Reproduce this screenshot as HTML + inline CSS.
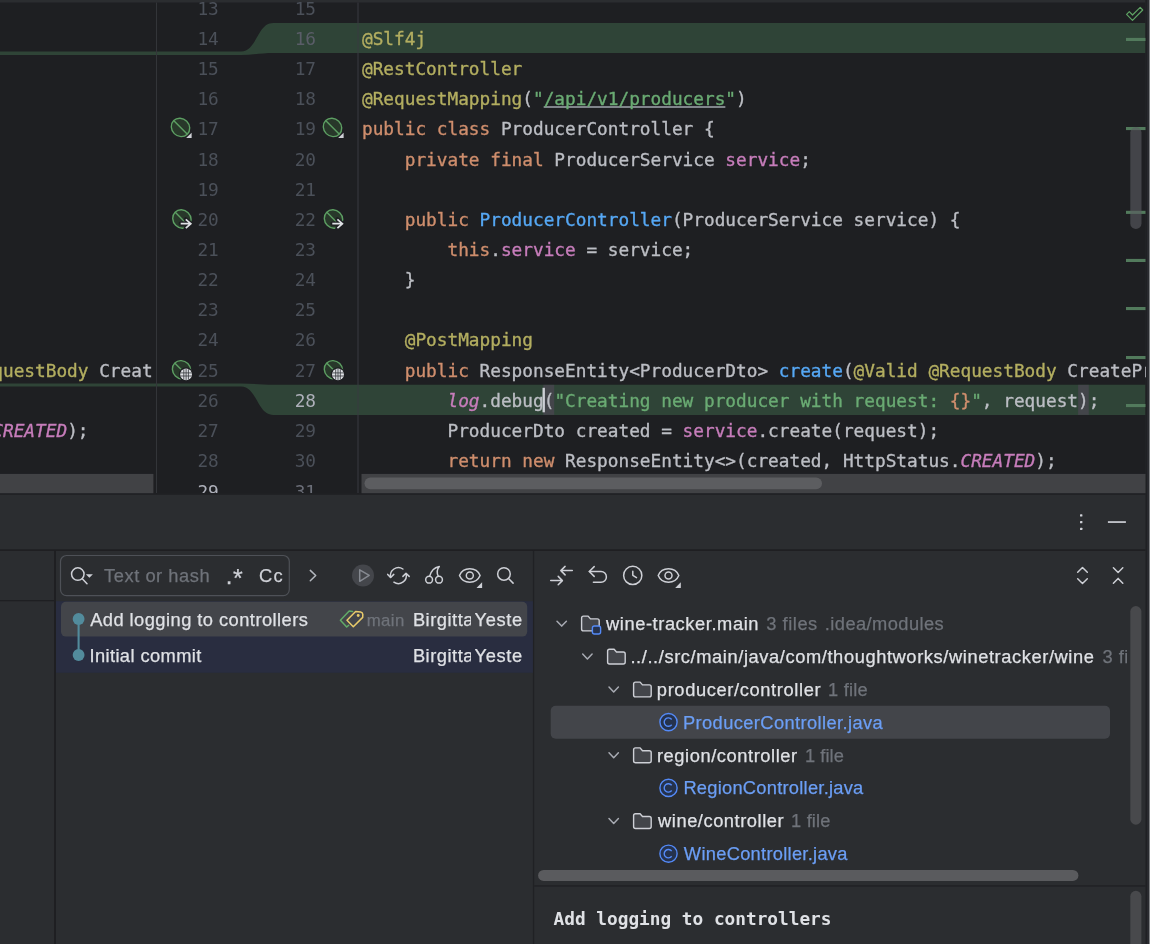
<!DOCTYPE html>
<html lang="en"><head><meta charset="utf-8"><title>IDE</title><style>
html,body{margin:0;padding:0;background:#2b2d30;}
body{width:1150px;height:944px;position:relative;overflow:hidden;font-family:'Liberation Sans',sans-serif;}
#root{position:absolute;left:0;top:0;width:1150px;height:944px;overflow:hidden;will-change:transform;}
.abs{position:absolute;}
svg{position:absolute;left:0;top:0;overflow:visible}
.code{position:absolute;font-family:'DejaVu Sans Mono','Liberation Mono',monospace;font-size:17.76px;line-height:20px;white-space:pre;color:#bcbec4;-webkit-text-stroke:0.35px;}
.ln{text-align:right;color:#4b5059;-webkit-text-stroke:0;}
.k{color:#cf8e6d} .a{color:#b3ae60} .s{color:#6aab73} .f{color:#c77dbb} .m{color:#56a8f5}
.i{font-style:italic}
.u{text-decoration:underline;text-decoration-thickness:1.5px;text-underline-offset:0.6px;text-decoration-color:#80848b;text-decoration-skip-ink:none}
.ui{position:absolute;font-family:'Liberation Sans',sans-serif;font-size:18.3px;color:#dfe1e5;white-space:pre;-webkit-text-stroke:0.25px;}
.g{color:#6f737a} .ic{color:#ced0d6} .b{color:#6b9ef5}
</style></head><body>
<div id="root">
<svg width="1150" height="944" viewBox="0 0 1150 944">
<rect x="0.00" y="0.00" width="1145.50" height="493.20" fill="#1e1f22"/>
<rect x="0.00" y="0.00" width="1145.50" height="2.50" fill="#2b2d30"/>
<path d="M0 51.6 H241 C257 51.6 257 23.0 273.2 23.0 H1145.5 V53.0 H273.2 C262 53.0 252 55 241 55 H0 Z" fill="#2f4437"/>
<path d="M0 383.4 H241 C252 383.4 262 384.85 273.2 384.85 H1145.5 V414.9 H273.2 C257 414.9 257 386.5 241 386.5 H0 Z" fill="#2f4437"/>
<rect x="543.30" y="384.85" width="10.90" height="30.05" fill="#43454a"/>
<rect x="1078.10" y="384.85" width="10.70" height="30.05" fill="#43454a"/>
<rect x="156.00" y="2.50" width="1.00" height="490.70" fill="#333539"/>
<rect x="357.50" y="2.50" width="1.00" height="490.70" fill="#393b40"/>
<rect x="542.50" y="387.80" width="2.40" height="24.50" fill="#ced0d6"/>
<rect x="1145.50" y="0.00" width="1.65" height="944.00" fill="#1f2023"/>
<rect x="1147.15" y="0.00" width="1.85" height="944.00" fill="#292b2f"/>
<rect x="1149.00" y="0.00" width="1.00" height="944.00" fill="#808285"/>
<rect x="0.00" y="493.20" width="1145.50" height="1.50" fill="#1e1f22"/>
<rect x="0.00" y="549.30" width="1145.50" height="1.60" fill="#1e1f22"/>
<rect x="54.10" y="550.80" width="1.90" height="393.20" fill="#1e1f22"/>
<rect x="0.00" y="600.00" width="54.10" height="1.30" fill="#1e1f22"/>
<rect x="532.90" y="550.80" width="1.30" height="393.20" fill="#202124"/>
<rect x="534.20" y="885.20" width="611.30" height="1.50" fill="#212225"/>
<rect x="1080.00" y="514.20" width="2.40" height="2.40" rx="0.6" fill="#ced0d6"/>
<rect x="1080.00" y="520.90" width="2.40" height="2.40" rx="0.6" fill="#ced0d6"/>
<rect x="1080.00" y="527.70" width="2.40" height="2.40" rx="0.6" fill="#ced0d6"/>
<rect x="1107.90" y="521.20" width="18.00" height="1.70" fill="#ced0d6"/>
<rect x="60.5" y="555.5" width="228.8" height="40.1" rx="6" fill="none" stroke="#4e5157" stroke-width="1.2"/>
<rect x="56.00" y="601.20" width="476.90" height="71.50" fill="#292d40"/>
<rect x="61.00" y="601.70" width="466.20" height="34.90" rx="5" fill="#43454a"/>
<rect x="550.70" y="705.80" width="559.30" height="32.90" rx="5" fill="#43454a"/>
<rect x="1130.30" y="606.00" width="11.10" height="218.70" rx="5.55" fill="#48494c"/>
<rect x="538.10" y="869.90" width="540.30" height="11.00" rx="5.5" fill="#5a5b5e"/>
<rect x="1130.30" y="890.80" width="11.10" height="79.20" rx="5.55" fill="#48494c"/>
</svg>
<div class="abs" style="left:0;top:0;width:1145.5px;height:493.2px;overflow:hidden">
<div class="code ln" style="left:160px;top:-1px;width:58.8px;">13</div>
<div class="code ln" style="left:258px;top:-1px;width:58.0px;">15</div>
<div class="code ln" style="left:160px;top:29px;width:58.8px;">14</div>
<div class="code ln" style="left:258px;top:29px;width:58.0px;color:#5a5d68;">16</div>
<div class="code" style="left:362px;top:29px;"><span class="a">@Slf4j</span></div>
<div class="code ln" style="left:160px;top:59px;width:58.8px;">15</div>
<div class="code ln" style="left:258px;top:59px;width:58.0px;">17</div>
<div class="code" style="left:362px;top:59px;"><span class="a">@RestController</span></div>
<div class="code ln" style="left:160px;top:89px;width:58.8px;">16</div>
<div class="code ln" style="left:258px;top:89px;width:58.0px;">18</div>
<div class="code" style="left:362px;top:89px;"><span class="a">@RequestMapping</span>(<span class="s">"<span class="u">/api/v1/producers</span>"</span>)</div>
<div class="code ln" style="left:160px;top:119px;width:58.8px;">17</div>
<div class="code ln" style="left:258px;top:119px;width:58.0px;">19</div>
<div class="code" style="left:362px;top:119px;"><span class="k">public class</span> ProducerController {</div>
<div class="code ln" style="left:160px;top:150px;width:58.8px;">18</div>
<div class="code ln" style="left:258px;top:150px;width:58.0px;">20</div>
<div class="code" style="left:362px;top:150px;">    <span class="k">private final</span> ProducerService <span class="f">service</span>;</div>
<div class="code ln" style="left:160px;top:180px;width:58.8px;">19</div>
<div class="code ln" style="left:258px;top:180px;width:58.0px;">21</div>
<div class="code ln" style="left:160px;top:210px;width:58.8px;">20</div>
<div class="code ln" style="left:258px;top:210px;width:58.0px;">22</div>
<div class="code" style="left:362px;top:210px;">    <span class="k">public</span> <span class="m">ProducerController</span>(ProducerService service) {</div>
<div class="code ln" style="left:160px;top:240px;width:58.8px;">21</div>
<div class="code ln" style="left:258px;top:240px;width:58.0px;">23</div>
<div class="code" style="left:362px;top:240px;">        <span class="k">this</span>.<span class="f">service</span> = service;</div>
<div class="code ln" style="left:160px;top:270px;width:58.8px;">22</div>
<div class="code ln" style="left:258px;top:270px;width:58.0px;">24</div>
<div class="code" style="left:362px;top:270px;">    }</div>
<div class="code ln" style="left:160px;top:300px;width:58.8px;">23</div>
<div class="code ln" style="left:258px;top:300px;width:58.0px;">25</div>
<div class="code ln" style="left:160px;top:330px;width:58.8px;">24</div>
<div class="code ln" style="left:258px;top:330px;width:58.0px;">26</div>
<div class="code" style="left:362px;top:330px;">    <span class="a">@PostMapping</span></div>
<div class="code ln" style="left:160px;top:361px;width:58.8px;">25</div>
<div class="code ln" style="left:258px;top:361px;width:58.0px;">27</div>
<div class="code" style="left:362px;top:361px;">    <span class="k">public</span> ResponseEntity&lt;ProducerDto&gt; <span class="m">create</span>(<span class="a">@Valid @RequestBody</span> CreateProducerRequest request) {</div>
<div class="code ln" style="left:160px;top:391px;width:58.8px;">26</div>
<div class="code ln" style="left:258px;top:391px;width:58.0px;color:#aeb0ba;">28</div>
<div class="code" style="left:362px;top:391px;">        <span class="f i">log</span>.debug(<span class="s">"Creating new producer with request: <span class="k">{}</span>"</span>, request);</div>
<div class="code ln" style="left:160px;top:421px;width:58.8px;">27</div>
<div class="code ln" style="left:258px;top:421px;width:58.0px;">29</div>
<div class="code" style="left:362px;top:421px;">        ProducerDto created = <span class="f">service</span>.create(request);</div>
<div class="code ln" style="left:160px;top:451px;width:58.8px;">28</div>
<div class="code ln" style="left:258px;top:451px;width:58.0px;">30</div>
<div class="code" style="left:362px;top:451px;">        <span class="k">return new</span> ResponseEntity&lt;&gt;(created, HttpStatus.<span class="f i">CREATED</span>);</div>
<div class="code ln" style="left:160px;top:482px;width:58.8px;color:#aeb0ba;">29</div>
<div class="code ln" style="left:258px;top:482px;width:58.0px;color:#6b6e78;">31</div>
</div>
<div class="abs" style="left:0;top:0;width:153.5px;height:493px;overflow:hidden">
<div class="code" style="left:-7.7px;top:361px;"><span class="a">questBody</span> Creat</div>
<div class="code" style="left:-7.7px;top:421px;"><span class="f i">CREATED</span>);</div>
</div>
<div class="ui g" style="left:104.08px;top:565px;letter-spacing:0.540px;line-height:21px;">Text or hash</div>
<div class="ui ic" style="left:225.69px;top:562px;letter-spacing:0.400px;line-height:27px;font-size:24px;">.</div>
<div class="ui ic" style="left:232.95px;top:564px;letter-spacing:0.400px;line-height:28px;font-size:25px;">*</div>
<div class="ui ic" style="left:258.95px;top:565px;letter-spacing:1.316px;line-height:21px;">Cc</div>
<div class="ui" style="left:90.15px;top:609px;letter-spacing:0.460px;line-height:21px;">Add logging to controllers</div>
<div class="ui" style="left:89.41px;top:645px;letter-spacing:0.403px;line-height:21px;">Initial commit</div>
<div class="ui g" style="left:366.64px;top:611px;letter-spacing:0.435px;line-height:19px;font-size:16.8px;">main</div>
<div class="ui" style="left:412.89px;top:609px;letter-spacing:0.527px;line-height:21px;width:58.2px;overflow:hidden;">Birgitta</div>
<div class="ui" style="left:474.57px;top:609px;letter-spacing:0.627px;line-height:21px;width:47.2px;overflow:hidden;">Yesterday</div>
<div class="ui" style="left:412.89px;top:645px;letter-spacing:0.527px;line-height:21px;width:58.2px;overflow:hidden;">Birgitta</div>
<div class="ui" style="left:474.57px;top:645px;letter-spacing:0.627px;line-height:21px;width:47.2px;overflow:hidden;">Yesterday</div>
<div class="abs" style="left:534px;top:600px;width:592.5999999999999px;height:268px;overflow:hidden">
<div class="ui" style="left:71.99px;top:13px;letter-spacing:0.577px;line-height:21px;">wine-tracker.main</div>
<div class="ui g" style="left:232.28px;top:13px;letter-spacing:0.537px;line-height:21px;">3 files</div>
<div class="ui g" style="left:290.82px;top:13px;letter-spacing:0.426px;line-height:21px;">.idea/modules</div>
<div class="ui" style="left:96.42px;top:46px;letter-spacing:0.591px;line-height:21px;">../../src/main/java/com/thoughtworks/winetracker/wine</div>
<div class="ui g" style="left:568.38px;top:46px;letter-spacing:0.537px;line-height:21px;">3 files</div>
<div class="ui" style="left:122.87px;top:79px;letter-spacing:0.628px;line-height:21px;">producer/controller</div>
<div class="ui g" style="left:294.10px;top:79px;letter-spacing:0.186px;line-height:21px;">1 file</div>
<div class="ui b" style="left:148.99px;top:112px;letter-spacing:0.395px;line-height:21px;">ProducerController.java</div>
<div class="ui" style="left:122.95px;top:145px;letter-spacing:0.568px;line-height:21px;">region/controller</div>
<div class="ui g" style="left:271.00px;top:145px;letter-spacing:0.046px;line-height:21px;">1 file</div>
<div class="ui b" style="left:149.39px;top:177px;letter-spacing:0.256px;line-height:21px;">RegionController.java</div>
<div class="ui" style="left:124.09px;top:210px;letter-spacing:0.542px;line-height:21px;">wine/controller</div>
<div class="ui g" style="left:257.10px;top:210px;letter-spacing:0.146px;line-height:21px;">1 file</div>
<div class="ui b" style="left:149.86px;top:243px;letter-spacing:0.283px;line-height:21px;">WineController.java</div>
</div>
<div class="code" style="left:553.6px;top:909px;font-weight:bold;color:#dfe1e5;font-size:17.75px;-webkit-text-stroke:0;">Add logging to controllers</div>
<svg width="1150" height="944" viewBox="0 0 1150 944">
<g transform="translate(180.5 127.4)"><g transform="rotate(45)"><ellipse cx="0" cy="0" rx="9.6" ry="8.8" fill="#28382a" stroke="#5d9f63" stroke-width="1.4"/><path d="M-9.4 0 H9.4" stroke="#5d9f63" stroke-width="1.4"/></g><path d="M11.1 5.4 V10.7 H5.6 Z" fill="#ced0d6"/></g>
<g transform="translate(332.5 127.4)"><g transform="rotate(45)"><ellipse cx="0" cy="0" rx="9.6" ry="8.8" fill="#28382a" stroke="#5d9f63" stroke-width="1.4"/><path d="M-9.4 0 H9.4" stroke="#5d9f63" stroke-width="1.4"/></g><path d="M11.1 5.4 V10.7 H5.6 Z" fill="#ced0d6"/></g>
<g transform="translate(181.9 219.0)"><g transform="rotate(45)"><ellipse cx="0" cy="0" rx="9.6" ry="8.8" fill="#28382a" stroke="#5d9f63" stroke-width="1.4"/><path d="M-9.4 0 H9.4" stroke="#5d9f63" stroke-width="1.4"/></g><path d="M-1.2 4.7 H8.9 M3.9 0.4 L8.9 4.7 L3.9 9.2" stroke="#1e1f22" stroke-width="4.3" fill="none" stroke-linecap="round" stroke-linejoin="round"/><path d="M-1.2 4.7 H8.9 M3.9 0.4 L8.9 4.7 L3.9 9.2" stroke="#dfe1e5" stroke-width="1.7" fill="none"/></g>
<g transform="translate(333.5 219.0)"><g transform="rotate(45)"><ellipse cx="0" cy="0" rx="9.6" ry="8.8" fill="#28382a" stroke="#5d9f63" stroke-width="1.4"/><path d="M-9.4 0 H9.4" stroke="#5d9f63" stroke-width="1.4"/></g><path d="M-1.2 4.7 H8.9 M3.9 0.4 L8.9 4.7 L3.9 9.2" stroke="#1e1f22" stroke-width="4.3" fill="none" stroke-linecap="round" stroke-linejoin="round"/><path d="M-1.2 4.7 H8.9 M3.9 0.4 L8.9 4.7 L3.9 9.2" stroke="#dfe1e5" stroke-width="1.7" fill="none"/></g>
<g transform="translate(181.6 369.8)"><g transform="rotate(45)"><ellipse cx="0" cy="0" rx="9.6" ry="8.8" fill="#28382a" stroke="#5d9f63" stroke-width="1.4"/><path d="M-9.4 0 H9.4" stroke="#5d9f63" stroke-width="1.4"/></g><circle cx="4.5" cy="4.6" r="7.2" fill="#1e1f22"/><circle cx="4.5" cy="4.6" r="5.9" fill="#dfe1e5"/><path d="M4.5 -1.3 V10.5 M2.2 -0.6 V9.8 M6.8 -0.6 V9.8 M-1 3.1 H10 M-1 6.2 H10" stroke="#3a3c41" stroke-width="0.85" fill="none"/></g>
<g transform="translate(333.5 369.8)"><g transform="rotate(45)"><ellipse cx="0" cy="0" rx="9.6" ry="8.8" fill="#28382a" stroke="#5d9f63" stroke-width="1.4"/><path d="M-9.4 0 H9.4" stroke="#5d9f63" stroke-width="1.4"/></g><circle cx="4.5" cy="4.6" r="7.2" fill="#1e1f22"/><circle cx="4.5" cy="4.6" r="5.9" fill="#dfe1e5"/><path d="M4.5 -1.3 V10.5 M2.2 -0.6 V9.8 M6.8 -0.6 V9.8 M-1 3.1 H10 M-1 6.2 H10" stroke="#3a3c41" stroke-width="0.85" fill="none"/></g>
<rect x="0" y="473.9" width="153.4" height="19.3" fill="#414245"/>
<rect x="361.5" y="473.9" width="784.0" height="19.3" fill="#414245"/>
<rect x="364.5" y="477.4" width="457.5" height="11.8" rx="5.9" fill="#5c5d60"/>
<rect x="1126" y="37.9" width="19.5" height="3.1" fill="#527a5c"/>
<rect x="1126" y="127.0" width="19.5" height="3.1" fill="#527a5c"/>
<rect x="1126" y="210.8" width="19.5" height="3.1" fill="#527a5c"/>
<rect x="1126" y="258.9" width="19.5" height="3.1" fill="#527a5c"/>
<rect x="1126" y="307.0" width="19.5" height="3.1" fill="#527a5c"/>
<rect x="1126" y="356.0" width="19.5" height="3.1" fill="#527a5c"/>
<rect x="1126" y="404.0" width="19.5" height="3.1" fill="#527a5c"/>
<rect x="1130.3" y="127" width="11.2" height="102" rx="5.6" fill="#5a5c61" fill-opacity="0.62"/>
<path d="M1126.6 14.4 L1129.3 11.7 L1132.5 15 L1140.2 7.4 L1142.7 10 L1132.5 20.3 Z" fill="none" stroke="#5fa364" stroke-width="1.2" stroke-linejoin="round"/>
<g fill="none" stroke-linecap="round" stroke-linejoin="round">
<path d="M78.6 619 V655" stroke="#528b9c" stroke-width="2.1"/>
<circle cx="78.6" cy="619" r="5.9" fill="#528b9c"/><circle cx="78.6" cy="655" r="5.9" fill="#528b9c"/>
<circle cx="77.8" cy="574.1" r="6.25" stroke="#ced0d6" stroke-width="1.5"/><path d="M82.3 578.8 L87 583.7" stroke="#ced0d6" stroke-width="1.5"/><path d="M85.9 574.2 H92.9 L89.4 577.8 Z" fill="#ced0d6"/>
<path d="M310.3 570.4 L315.7 575.5 L310.3 580.7" stroke="#b4b8bf" stroke-width="1.5"/>
<circle cx="363" cy="575.45" r="11" fill="#44464b"/>
<path d="M359.7 569.9 V581.3 L369.2 575.45 Z" stroke="#868a91" stroke-width="1.5"/>
<g stroke="#ced0d6" stroke-width="1.5"><path d="M390.6 577.3 A8 8 0 0 1 402.9 569"/><path d="M406.2 573.9 A8 8 0 0 1 393.9 582.2"/><path d="M387.7 574.4 L390.6 577.5 L393.8 574.4"/><path d="M402.9 576.4 L406 573.3 L409.2 576.4"/></g>
<g stroke="#ced0d6" stroke-width="1.5"><circle cx="429.1" cy="579.7" r="3.4"/><circle cx="439" cy="579.7" r="3.4"/><path d="M429.6 576.3 C430.8 571.2 434.6 567.4 439.3 566.4 C436.5 569.6 436.6 572.6 438.3 576.3"/></g>
<g stroke="#ced0d6" stroke-width="1.5"><path d="M459.50 575.45 C463.20 566.55 476.40 566.55 480.10 575.45 C476.40 584.35 463.20 584.35 459.50 575.45 Z"/><circle cx="469.8" cy="575.45" r="3.5"/></g><path d="M482.10 582.35 V588.10 H476.50 Z" fill="#ced0d6"/>
<circle cx="503.95" cy="573.95" r="6.3" stroke="#ced0d6" stroke-width="1.5"/><path d="M508.5 578.5 L513.1 583.1" stroke="#ced0d6" stroke-width="1.5"/>
<g stroke="#ced0d6" stroke-width="1.5"><path d="M572.3 570.6 H560.8 M565.1 566.4 L560.8 570.6 L565.1 574.9"/><path d="M550.7 580.6 H562.4 M558.2 576.4 L562.4 580.6 L558.2 584.8"/></g>
<g stroke="#ced0d6" stroke-width="1.5"><path d="M594.2 566.6 L589.3 571.5 L594.2 576.4"/><path d="M589.3 571.5 H601 A5.4 5.4 0 0 1 601 582.3 H593.4"/></g>
<g stroke="#ced0d6" stroke-width="1.5"><circle cx="632.75" cy="575.45" r="9.1"/><path d="M632.8 571.2 V575.3 L636.5 577.6"/></g>
<g stroke="#ced0d6" stroke-width="1.5"><path d="M658.20 575.45 C661.90 566.55 675.10 566.55 678.80 575.45 C675.10 584.35 661.90 584.35 658.20 575.45 Z"/><circle cx="668.5" cy="575.45" r="3.5"/></g><path d="M680.80 582.35 V588.10 H675.20 Z" fill="#ced0d6"/>
<g stroke="#ced0d6" stroke-width="1.5"><path d="M1077.7 572.2 L1082.5 567.5 L1087.3 572.2"/><path d="M1077.7 578.8 L1082.5 583.5 L1087.3 578.8"/></g>
<g stroke="#ced0d6" stroke-width="1.5"><path d="M1113.4 567.8 L1118.1 572.5 L1122.8 567.8"/><path d="M1113.4 583.2 L1118.1 578.4 L1122.8 583.2"/></g>
<g stroke-width="1.5"><path d="M352.6 611.5 L349.2 611.1 L340.4 620.2 L346.7 627 L348.7 625.3" stroke="#62ab68"/><path d="M347 620.3 L355.6 611.5 L360.6 612 Q362.6 612.3 362.8 614.4 L362.7 617.4 L353.3 626.8 Z" stroke="#e9cb6b"/><circle cx="358.2" cy="615.5" r="1.4" fill="#e9cb6b"/></g>
<path d="M557.0 621.2 L561.7 626.1 L566.4 621.2" stroke="#a8abb3" stroke-width="1.5"/>
<path transform="translate(580.9 615.4)" d="M0.7 2.6 A1.9 1.9 0 0 1 2.6 0.7 H7.2 L9.6 3.5 H16.4 A1.9 1.9 0 0 1 18.3 5.4 V13.6 A1.9 1.9 0 0 1 16.4 15.5 H2.6 A1.9 1.9 0 0 1 0.7 13.6 Z" fill="#43454a" stroke="#ced0d6" stroke-width="1.4"/>
<rect x="592.4" y="626" width="8.2" height="8" rx="2" fill="#25324d" stroke="#548af7" stroke-width="1.4"/>
<path d="M582.7 654.1 L587.4 659.0 L592.1 654.1" stroke="#a8abb3" stroke-width="1.5"/>
<path transform="translate(606.9 648.5)" d="M0.7 2.6 A1.9 1.9 0 0 1 2.6 0.7 H7.2 L9.6 3.5 H16.4 A1.9 1.9 0 0 1 18.3 5.4 V13.6 A1.9 1.9 0 0 1 16.4 15.5 H2.6 A1.9 1.9 0 0 1 0.7 13.6 Z" fill="#43454a" stroke="#ced0d6" stroke-width="1.4"/>
<path d="M609.0 687.0 L613.7 691.9 L618.4 687.0" stroke="#a8abb3" stroke-width="1.5"/>
<path transform="translate(632.9 681.4)" d="M0.7 2.6 A1.9 1.9 0 0 1 2.6 0.7 H7.2 L9.6 3.5 H16.4 A1.9 1.9 0 0 1 18.3 5.4 V13.6 A1.9 1.9 0 0 1 16.4 15.5 H2.6 A1.9 1.9 0 0 1 0.7 13.6 Z" fill="#43454a" stroke="#ced0d6" stroke-width="1.4"/>
<path d="M609.0 752.8 L613.7 757.7 L618.4 752.8" stroke="#a8abb3" stroke-width="1.5"/>
<path transform="translate(632.9 747.2)" d="M0.7 2.6 A1.9 1.9 0 0 1 2.6 0.7 H7.2 L9.6 3.5 H16.4 A1.9 1.9 0 0 1 18.3 5.4 V13.6 A1.9 1.9 0 0 1 16.4 15.5 H2.6 A1.9 1.9 0 0 1 0.7 13.6 Z" fill="#43454a" stroke="#ced0d6" stroke-width="1.4"/>
<path d="M609.0 818.6 L613.7 823.5 L618.4 818.6" stroke="#a8abb3" stroke-width="1.5"/>
<path transform="translate(632.9 813.0)" d="M0.7 2.6 A1.9 1.9 0 0 1 2.6 0.7 H7.2 L9.6 3.5 H16.4 A1.9 1.9 0 0 1 18.3 5.4 V13.6 A1.9 1.9 0 0 1 16.4 15.5 H2.6 A1.9 1.9 0 0 1 0.7 13.6 Z" fill="#43454a" stroke="#ced0d6" stroke-width="1.4"/>
<circle cx="668.5" cy="722.1" r="8.6" fill="#25324d" stroke="#548af7" stroke-width="1.4"/><path d="M671.7 719.5 A4.2 4.2 0 1 0 671.7 724.7" stroke="#548af7" stroke-width="1.4" stroke-linecap="butt"/>
<circle cx="668.5" cy="787.9" r="8.6" fill="#25324d" stroke="#548af7" stroke-width="1.4"/><path d="M671.7 785.3 A4.2 4.2 0 1 0 671.7 790.5" stroke="#548af7" stroke-width="1.4" stroke-linecap="butt"/>
<circle cx="668.5" cy="853.7" r="8.6" fill="#25324d" stroke="#548af7" stroke-width="1.4"/><path d="M671.7 851.1 A4.2 4.2 0 1 0 671.7 856.3" stroke="#548af7" stroke-width="1.4" stroke-linecap="butt"/>
</g>
</svg>
</div>
</body></html>
